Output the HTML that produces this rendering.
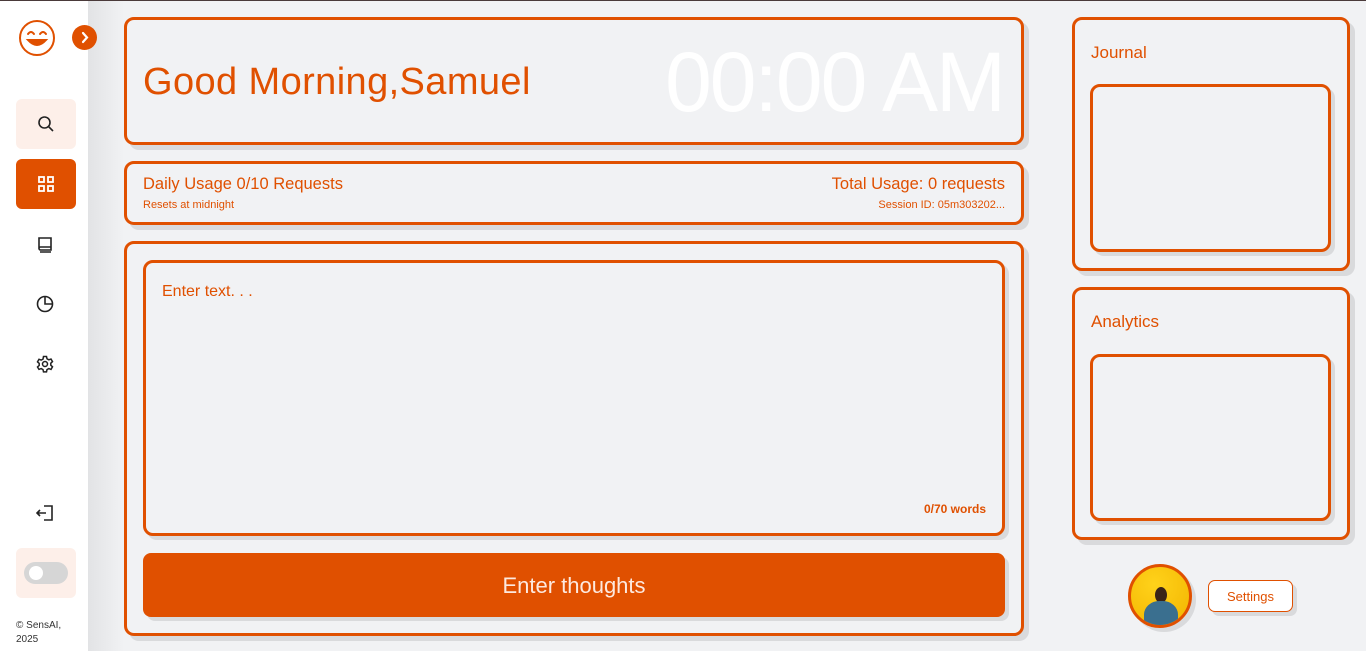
<!DOCTYPE html>
<html><head><meta charset="utf-8"><style>
*{box-sizing:border-box;margin:0;padding:0}
body{width:1366px;height:651px;overflow:hidden;background:#f1f2f4;font-family:"Liberation Sans",sans-serif;position:relative;color:#e05000}
.topline{position:absolute;left:0;top:0;width:1366px;height:1px;background:#4a3a3a}
.side{position:absolute;left:0;top:1px;width:88px;height:650px;background:#fff}
.sg{position:absolute;left:88px;top:1px;width:36px;height:650px;background:linear-gradient(90deg,#e2e3e5,#f1f2f4)}
.card{position:absolute;border:3px solid #e05000;border-radius:10px;box-shadow:5px 5px 0 #d9dadc;background:#f1f2f4}
.inner{position:absolute;border:3px solid #e05000;border-radius:10px;box-shadow:4px 4px 0 #d9dadc;background:#f1f2f4}
.nb{position:absolute;left:16px;width:60px;height:50px;border-radius:6px;display:flex;align-items:center;justify-content:center}
.ic{position:absolute;left:36px}
</style></head><body>
<div class="topline"></div>
<div class="side"></div><div class="sg"></div>
<svg style="position:absolute;left:18px;top:19px" width="38" height="38" viewBox="0 0 38 38" fill="none" stroke="#e05000" stroke-width="2"><circle cx="19" cy="19" r="17"/><path d="M10 15q3-4 6 0M22 15q3-4 6 0" stroke-linecap="round"/><path d="M10 21q9 10 18 0z" fill="#e05000"/></svg>
<div style="position:absolute;left:72px;top:25px;width:25px;height:25px;border-radius:50%;background:#e05000"></div>
<svg style="position:absolute;left:72px;top:25px" width="25" height="25"><path d="M11 8l4 4.5-4 4.5" stroke="#fff" stroke-width="2.2" fill="none" stroke-linecap="round"/></svg>
<div class="nb" style="top:99px;background:#fdefe9"><svg width="18" height="18" fill="none" stroke="#222" stroke-width="1.6"><circle cx="7.5" cy="7.5" r="5.5"/><path d="M11.5 11.5l4.5 4.5"/></svg></div>
<div class="nb" style="top:159px;background:#e05000"><svg width="18" height="18" fill="none" stroke="#fff" stroke-width="1.8"><rect x="2" y="2" width="5" height="5"/><rect x="11" y="2" width="5" height="5"/><rect x="2" y="11" width="5" height="5"/><rect x="11" y="11" width="5" height="5"/></svg></div>
<svg class="ic" style="top:235px" width="18" height="18" fill="none" stroke="#222" stroke-width="1.6"><path d="M3 14V3h12v12H4.5a1.5 1.5 0 0 1 0-3H15M4 17h11"/></svg>
<svg class="ic" style="top:295px" width="18" height="18" fill="none" stroke="#222" stroke-width="1.6"><circle cx="9" cy="9" r="7.5"/><path d="M9 1.5V9h7.5"/></svg>
<svg class="ic" style="top:355px" width="18" height="18" fill="none" stroke="#222" stroke-width="1.5"><circle cx="9" cy="9" r="2.5"/><path d="M7.5 1.5h3l.5 2.3 1.8 1 2.2-.8 1.5 2.6-1.7 1.6v2l1.7 1.6-1.5 2.6-2.2-.8-1.8 1-.5 2.3h-3l-.5-2.3-1.8-1-2.2.8L1.5 12l1.7-1.6v-2L1.5 6.9 3 4.3l2.2.8 1.8-1z"/></svg>
<svg class="ic" style="top:504px" width="18" height="18" fill="none" stroke="#222" stroke-width="1.6"><path d="M8 2h8v14H8M1 9h9M4 6L1 9l3 3"/></svg>
<div class="nb" style="top:548px;background:#fdefe9"><div style="width:44px;height:22px;border-radius:11px;background:#d6d6d6;position:relative"><div style="position:absolute;left:5px;top:4px;width:14px;height:14px;border-radius:50%;background:#fff"></div></div></div>
<div style="position:absolute;left:16px;top:619px;font-size:10px;line-height:14px;color:#333">© SensAI,<br>2025</div>

<div class="card" style="left:124px;top:17px;width:900px;height:128px"></div>
<div style="position:absolute;left:143px;top:60px;font-size:38px;line-height:44px;letter-spacing:0.4px">Good Morning,Samuel</div>
<div style="position:absolute;right:362px;top:40px;font-size:84px;line-height:84px;color:#fff;letter-spacing:-2px">00:00 AM</div>

<div class="card" style="left:124px;top:161px;width:900px;height:64px"></div>
<div style="position:absolute;left:143px;top:175px;font-size:16.5px">Daily Usage 0/10 Requests</div>
<div style="position:absolute;left:143px;top:199px;font-size:11px">Resets at midnight</div>
<div style="position:absolute;right:361px;top:175px;font-size:16.5px">Total Usage: 0 requests</div>
<div style="position:absolute;right:361px;top:199px;font-size:11px">Session ID: 05m303202...</div>

<div class="card" style="left:124px;top:241px;width:900px;height:395px"></div>
<div class="inner" style="left:143px;top:260px;width:862px;height:276px"></div>
<div style="position:absolute;left:162px;top:283px;font-size:16px">Enter text. . .</div>
<div style="position:absolute;right:380px;top:502px;font-size:12px;font-weight:bold">0/70 words</div>
<div style="position:absolute;left:143px;top:553px;width:862px;height:64px;border-radius:8px;background:#e05000;box-shadow:4px 4px 0 #d9dadc;color:#fde9df;font-size:22px;display:flex;align-items:center;justify-content:center;padding-top:2px">Enter thoughts</div>

<div class="card" style="left:1072px;top:17px;width:278px;height:254px"></div>
<div style="position:absolute;left:1091px;top:43px;font-size:17px">Journal</div>
<div class="inner" style="left:1090px;top:84px;width:241px;height:168px"></div>
<div class="card" style="left:1072px;top:287px;width:278px;height:253px"></div>
<div style="position:absolute;left:1091px;top:312px;font-size:17px">Analytics</div>
<div class="inner" style="left:1090px;top:354px;width:241px;height:167px"></div>

<div style="position:absolute;left:1128px;top:564px;width:64px;height:64px;border-radius:50%;border:3px solid #e05000;background:radial-gradient(circle at 40% 30%,#ffd21a,#f2b400);box-shadow:4px 4px 0 #d9dadc;overflow:hidden">
<div style="position:absolute;left:24px;top:20px;width:12px;height:16px;border-radius:50%;background:#3a2418"></div>
<div style="position:absolute;left:13px;top:34px;width:34px;height:30px;border-radius:45% 45% 0 0;background:#3a6f8f"></div></div>
<div style="position:absolute;left:1208px;top:580px;width:85px;height:32px;border:1.5px solid #e05000;border-radius:7px;background:#fff;box-shadow:4px 4px 0 #d9dadc;font-size:13px;display:flex;align-items:center;justify-content:center">Settings</div>
</body></html>
